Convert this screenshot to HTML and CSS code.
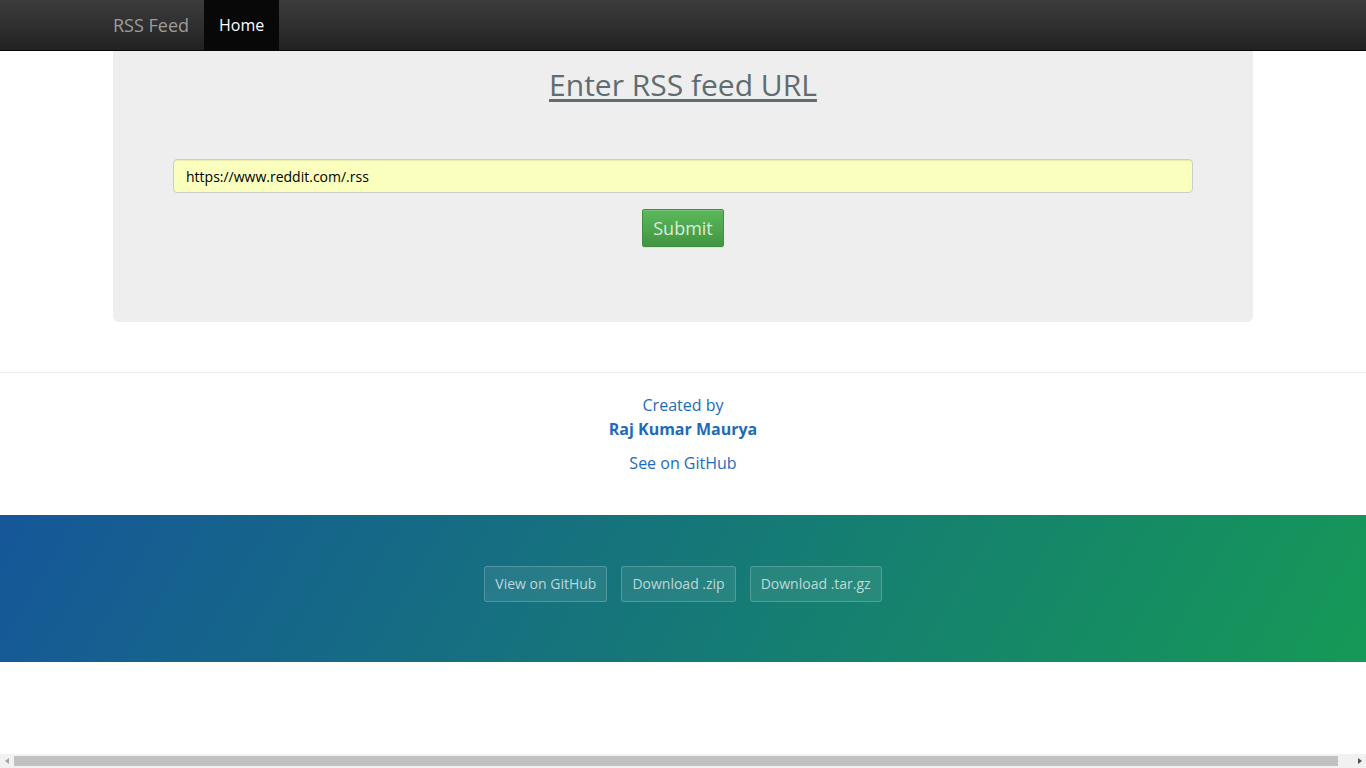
FILE: index.html
```html
<!DOCTYPE html>
<html lang="en">
<head>
<meta charset="utf-8">
<title>RSS Feed</title>
<link rel="stylesheet" href="styles.css">
</head>
<body>
<nav class="navbar">
  <div class="container nav-inner">
    <a class="brand" href="#">RSS Feed</a>
    <a class="nav-link active" href="#">Home</a>
  </div>
</nav>
<main class="container">
  <section class="jumbotron">
    <h1 class="title"><a href="#">Enter RSS feed URL</a></h1>
    <form class="feed-form">
      <input class="form-control" type="text" value="https://www.reddit.com/.rss">
      <button class="btn-submit" type="button">Submit</button>
    </form>
  </section>
</main>
<footer class="credits">
  <p class="created">Created by<br><strong>Raj Kumar Maurya</strong></p>
  <p class="gh"><a href="#">See on GitHub</a></p>
</footer>
<section class="page-header">
  <a class="pbtn" href="#">View on GitHub</a>
  <a class="pbtn" href="#">Download .zip</a>
  <a class="pbtn" href="#">Download .tar.gz</a>
</section>
<div class="hscroll" aria-hidden="true">
  <span class="arrow arrow-left"></span>
  <span class="thumb"></span>
  <span class="arrow arrow-right"></span>
</div>
</body>
</html>
```
FILE: styles.css
```css
html, body {
  margin: 0;
  padding: 0;
}
body {
  font-family: "Open Sans", "Liberation Sans", sans-serif;
  font-size: 16px;
  line-height: 1.5;
  color: #606c71;
  background: #fff;
}
a { text-decoration: none; }

.container {
  width: 1140px;
  margin: 0 auto;
}

.navbar {
  height: 50px;
  background: linear-gradient(to bottom, #3c3c3c 0, #222 100%);
  border-bottom: 1px solid #080808;
}
.nav-inner {
  display: flex;
  height: 50px;
}
.brand {
  display: block;
  margin-left: -15px;
  padding: 15px;
  font-size: 18px;
  line-height: 20px;
  color: #9d9d9d;
}
.nav-link {
  display: block;
  padding: 15px;
  line-height: 20px;
  font-size: 16px;
  color: #9d9d9d;
}
.nav-link.active {
  background: #080808;
  color: #fff;
}

.jumbotron {
  background: #eee;
  border-radius: 0 0 6px 6px;
  padding: 17px 60px 75px;
  text-align: center;
}
.title {
  margin: 0;
  font-size: 30px;
  font-weight: 400;
  line-height: 33px;
}
.title a {
  color: #606c71;
  text-decoration: underline;
  text-underline-offset: 3px;
}
.feed-form {
  display: flex;
  flex-direction: column;
  align-items: center;
  margin-top: 58px;
}
.form-control {
  box-sizing: border-box;
  width: 100%;
  height: 34px;
  padding: 6px 12px;
  font-family: "Open Sans", "Liberation Sans", sans-serif;
  font-size: 14px;
  color: #000;
  background: #faffbd;
  border: 1px solid #ccc;
  border-radius: 4px;
  box-shadow: inset 0 1px 1px rgba(0,0,0,.075);
  outline: none;
}
.btn-submit {
  margin-top: 16px;
  height: 38px;
  width: 82px;
  padding: 0;
  font-family: "Open Sans", "Liberation Sans", sans-serif;
  font-size: 18px;
  color: #d9eed9;
  background: linear-gradient(to bottom, #5cb85c 0, #419641 100%);
  border: 1px solid #3e8f3e;
  border-radius: 2px;
  box-shadow: inset 0 1px 0 rgba(255,255,255,.15), 0 1px 1px rgba(0,0,0,.075);
}

.credits {
  margin-top: 50px;
  border-top: 1px solid #eee;
  padding: 20px 0 40px;
  text-align: center;
  color: #1e6bb8;
}
.created {
  margin: 0;
  line-height: 24px;
}
.created strong { font-weight: 700; }
.gh {
  margin: 10px 0 0;
  line-height: 24px;
}
.gh a { color: #1e6bb8; }

.page-header {
  height: 147px;
  box-sizing: border-box;
  padding-top: 51px;
  display: flex;
  justify-content: center;
  align-items: flex-start;
  gap: 14px;
  background: linear-gradient(120deg, #155799, #159957);
}
.pbtn {
  display: block;
  box-sizing: border-box;
  height: 36px;
  line-height: 34px;
  padding: 0 10px;
  font-size: 14px;
  color: rgba(255,255,255,.7);
  background: rgba(255,255,255,.08);
  border: 1px solid rgba(255,255,255,.2);
  border-radius: 3px;
}

.hscroll {
  position: fixed;
  left: 0;
  right: 0;
  bottom: 0;
  height: 14px;
  background: #f1f1f1;
  display: flex;
  align-items: center;
}
.thumb {
  flex: 1;
  height: 10px;
  margin: 0 15px 0 1px;
  background: #c1c1c1;
}
.arrow {
  width: 13px;
  height: 14px;
  display: flex;
  align-items: center;
  justify-content: center;
}
.arrow::before {
  content: "";
  width: 0;
  height: 0;
  border-top: 3.5px solid transparent;
  border-bottom: 3.5px solid transparent;
}
.arrow-left::before {
  border-right: 4px solid #a3a3a3;
}
.arrow-right::before {
  border-left: 4px solid #505050;
}
```
